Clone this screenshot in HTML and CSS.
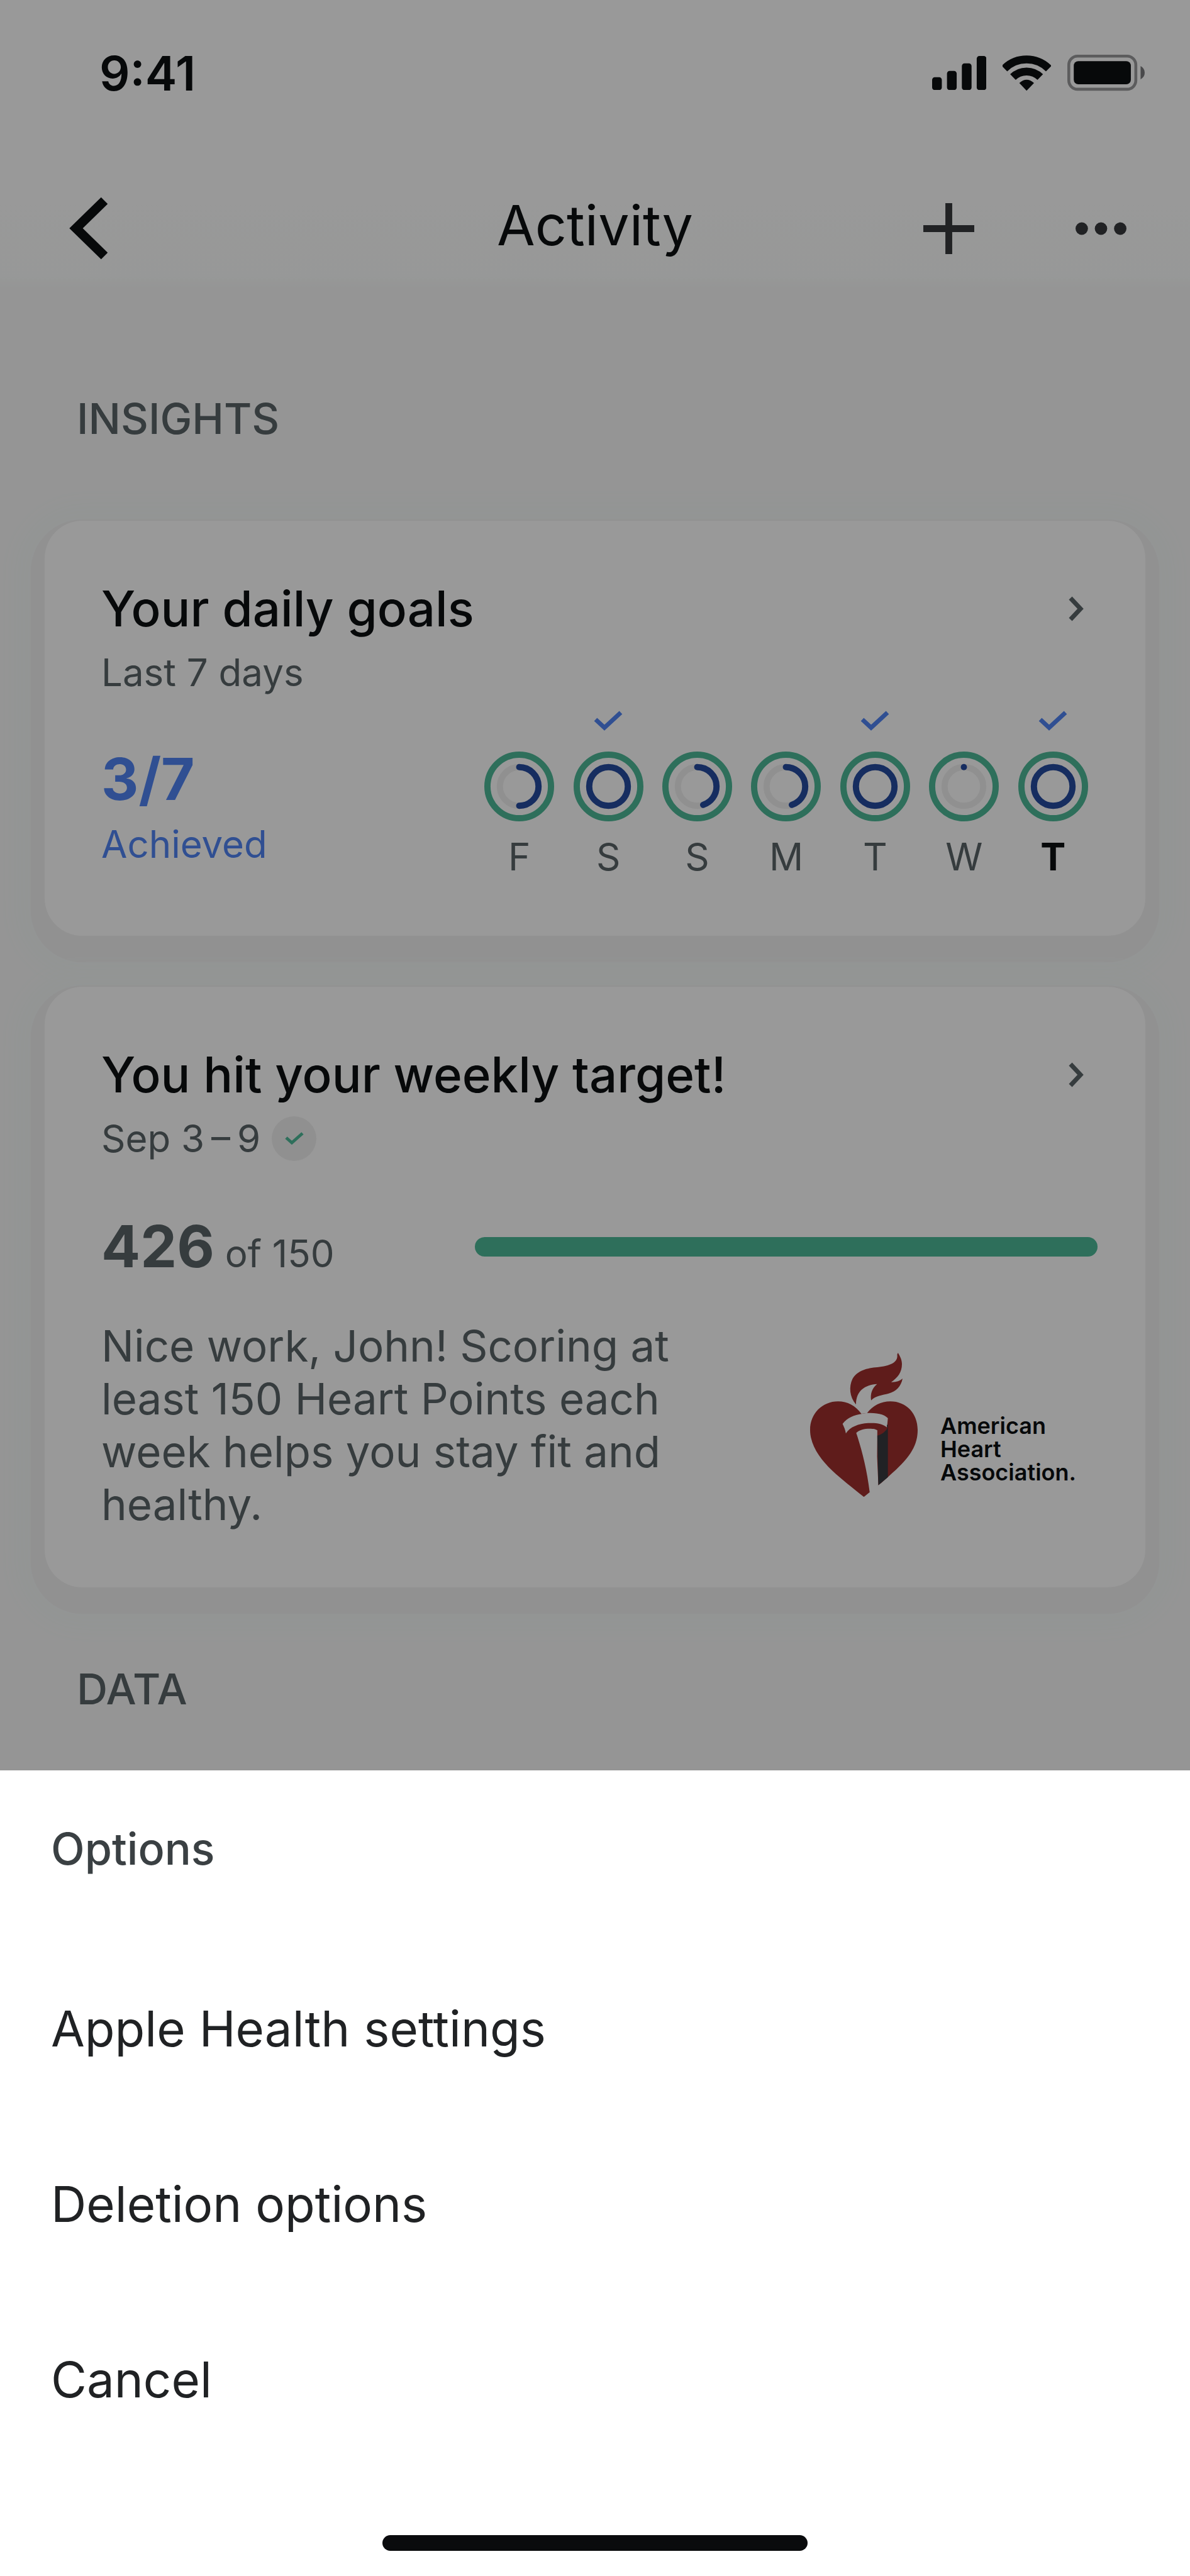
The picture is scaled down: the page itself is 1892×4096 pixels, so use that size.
FILE: index.html
```html
<!DOCTYPE html>
<html lang="en">
<head>
  <meta charset="UTF-8" />
  <meta name="viewport" content="width=device-width, initial-scale=1.0" />
  <title>Activity</title>
  <link rel="stylesheet" href="styles.css">
</head>
<body>
  <div class="screen">
    <div class="status-bar">
      <span class="time">9:41</span>
      <div class="status-icons">
        <svg class="signal" viewBox="0 0 262 165">
          <rect x="0" y="103" width="47" height="62" rx="13" />
          <rect x="72" y="72" width="47" height="93" rx="13" />
          <rect x="144" y="36" width="47" height="129" rx="13" />
          <rect x="216" y="0" width="47" height="165" rx="13" />
        </svg>
        <svg class="wifi" viewBox="475 85 234 171">
          <path d="M484 149A152 152 0 0 1 698 149M525 190A94 94 0 0 1 657 190" fill="none" stroke="currentColor" stroke-width="38" />
          <path d="M591 256L556 219Q591 187 627 219Z" />
        </svg>
        <svg class="battery" viewBox="0 0 374 174">
          <rect x="7" y="7" width="324" height="160" rx="42" fill="none" stroke="currentColor" stroke-opacity=".42" stroke-width="14" />
          <rect x="31" y="31" width="276" height="112" rx="22" />
          <path d="M354 55Q374 66 374 87T354 119Z" fill-opacity=".55" />
        </svg>
      </div>
    </div>

    <header class="header">
      <button class="icon-btn back" aria-label="Back">
        <svg viewBox="0 0 70 100"><path d="M65 6L20 50L65 94" /></svg>
      </button>
      <h1>Activity</h1>
      <div class="actions">
        <button class="icon-btn" aria-label="Add">
          <svg class="plus" viewBox="0 0 82 82"><path d="M41 0V82M0 41H82" /></svg>
        </button>
        <button class="icon-btn" aria-label="More">
          <svg class="dots" viewBox="0 0 82 82"><circle cx="10" cy="41" r="10" /><circle cx="41" cy="41" r="10" /><circle cx="72" cy="41" r="10" /></svg>
        </button>
      </div>
    </header>

    <main>
      <h2>INSIGHTS</h2>

      <section class="card">
        <div class="card-title">
          <h3>Your daily goals</h3>
          <button class="icon-btn" aria-label="Open daily goals">
            <svg class="chevron" viewBox="0 0 26 40"><path d="M4 3L20 20L4 37" /></svg>
          </button>
        </div>
        <p class="subtitle">Last 7 days</p>
        <div class="card-row">
          <div class="achieved">
            <strong>3/7</strong>
            <span>Achieved</span>
          </div>
          <div class="days">
            <div class="day">
              <svg class="check"></svg>
              <svg class="ring" viewBox="0 0 112 112"><circle class="outer" cx="56" cy="56" r="51" /><circle class="track" cx="56" cy="56" r="31" /><circle class="inner" cx="56" cy="56" r="31" pathLength="100" stroke-dasharray="50 100" /></svg>
              <span>F</span>
            </div>
            <div class="day">
              <svg class="check" viewBox="0 0 46 33"><path d="M3 15L17 28L43 4" /></svg>
              <svg class="ring" viewBox="0 0 112 112"><circle class="outer" cx="56" cy="56" r="51" /><circle class="inner" cx="56" cy="56" r="31" /></svg>
              <span>S</span>
            </div>
            <div class="day">
              <svg class="check"></svg>
              <svg class="ring" viewBox="0 0 112 112"><circle class="outer" cx="56" cy="56" r="51" /><circle class="track" cx="56" cy="56" r="31" /><circle class="inner" cx="56" cy="56" r="31" pathLength="100" stroke-dasharray="45 100" /></svg>
              <span>S</span>
            </div>
            <div class="day">
              <svg class="check"></svg>
              <svg class="ring" viewBox="0 0 112 112"><circle class="outer" cx="56" cy="56" r="51" /><circle class="track" cx="56" cy="56" r="31" /><circle class="inner" cx="56" cy="56" r="31" pathLength="100" stroke-dasharray="45 100" /></svg>
              <span>M</span>
            </div>
            <div class="day">
              <svg class="check" viewBox="0 0 46 33"><path d="M3 15L17 28L43 4" /></svg>
              <svg class="ring" viewBox="0 0 112 112"><circle class="outer" cx="56" cy="56" r="51" /><circle class="inner" cx="56" cy="56" r="31" /></svg>
              <span>T</span>
            </div>
            <div class="day">
              <svg class="check"></svg>
              <svg class="ring" viewBox="0 0 112 112"><circle class="outer" cx="56" cy="56" r="51" /><circle class="track" cx="56" cy="56" r="31" /><circle class="dot" cx="56" cy="25" r="5" /></svg>
              <span>W</span>
            </div>
            <div class="day today">
              <svg class="check" viewBox="0 0 46 33"><path d="M3 15L17 28L43 4" /></svg>
              <svg class="ring" viewBox="0 0 112 112"><circle class="outer" cx="56" cy="56" r="51" /><circle class="inner" cx="56" cy="56" r="31" /></svg>
              <span>T</span>
            </div>
          </div>
        </div>
      </section>

      <section class="card">
        <div class="card-title">
          <h3>You hit your weekly target!</h3>
          <button class="icon-btn" aria-label="Open weekly target">
            <svg class="chevron" viewBox="0 0 26 40"><path d="M4 3L20 20L4 37" /></svg>
          </button>
        </div>
        <p class="subtitle">Sep 3&thinsp;–&thinsp;9
          <span class="badge"><svg viewBox="0 0 30 22"><path d="M2 10L11 18L28 3" /></svg></span>
        </p>
        <div class="card-row points">
          <p class="score"><strong>426</strong> of 150</p>
          <div class="bar"></div>
        </div>
        <div class="message">
          <p>Nice work, John! Scoring at least 150 Heart Points each week helps you stay fit and healthy.</p>
          <div class="logo">
            <!-- torch and heart -->
            <svg viewBox="165 137 520 697">
              <path fill="#9e2f2d" d="M590 137C600 155 609 170 609 192C609 232 588 258 557 279C580 280 598 274 612 262C605 300 580 325 545 334C515 342 480 345 460 367C455 335 465 308 489 288C430 292 387 320 387 387C355 350 352 300 370 263C395 222 440 211 490 207C550 199 592 185 586 145Z" />
              <path fill="#9e2f2d" d="M413 432C385 393 345 372 300 372C225 372 165 430 165 510C165 585 215 652 270 705C320 752 370 790 425 834L495 777C515 762 525 752 541 738C630 660 685 600 685 510C685 430 630 372 553 372C508 372 468 392 440 429Z" />
              <path fill="#fff" d="M322 481C345 450 380 438 413 433L440 428C485 428 522 432 541 453L537 498C515 478 480 475 445 477C400 480 358 495 338 527C335 510 330 498 322 481Z" />
              <path fill="#fff" d="M388 525C403 509 428 504 453 504C472 504 483 506 490 512L489 640L495 778L480 800L453 811C440 700 412 595 388 525Z" />
              <path fill="#37393e" d="M490 538C512 532 527 520 539 502L536 490L541 480V738L495 777Z" />
            </svg>
            <span>American<br>Heart<br>Association.</span>
          </div>
        </div>
      </section>

      <h2>DATA</h2>
    </main>
  </div>

  <div class="backdrop"></div>

  <div class="sheet" role="dialog" aria-labelledby="sheet-title">
    <h2 id="sheet-title">Options</h2>
    <button>Apple Health settings</button>
    <button>Deletion options</button>
    <button>Cancel</button>
    <div class="home-indicator"></div>
  </div>
</body>
</html>
```

FILE: styles.css
```css
* {
  box-sizing: border-box;
  padding: 0;
  margin: 0;
}

body {
  font-family: Inter, "Liberation Sans", sans-serif;
  background: #f8f8f8;
  color: #0d0f12;
}

svg {
  display: block;
  fill: currentColor;
}

button {
  font: inherit;
  color: inherit;
  background: none;
  border: none;
  cursor: pointer;
}

.screen {
  height: 100vh;
  overflow: hidden;
}

/* status bar */
.status-bar {
  display: flex;
  justify-content: space-between;
  align-items: center;
  height: 232px;
  padding: 0 72px 0 158px;
  background: #fff;
}

.time {
  font-size: 76px;
  font-weight: 600;
}

.status-icons {
  display: flex;
  align-items: center;
  gap: 26px;
}

.signal { width: 86px; }
.wifi { width: 77px; }
.battery { width: 123px; }

/* header */
.header {
  display: grid;
  grid-template-columns: 1fr auto 1fr;
  align-items: center;
  height: 230px;
  padding: 50px 101px 18px;
  background: linear-gradient(#fff 40%, #fcfefd 90%, #f8f8f8);
}

.header h1 {
  font-size: 88px;
  font-weight: 400;
  padding-bottom: 10px;
}

.icon-btn path {
  fill: none;
  stroke: currentColor;
}

.back svg {
  width: 70px;
  stroke-width: 15;
}

.actions {
  display: flex;
  justify-content: flex-end;
  gap: 161px;
  color: #37393c;
}

.actions svg {
  width: 81px;
  stroke-width: 11;
}

.dots circle { stroke: none; }

/* content */
main { padding: 161px 71px 0; }

h2 {
  font-size: 68px;
  font-weight: 500;
  line-height: 84px;
  color: #5a6468;
}

main h2 {
  padding-left: 51px;
  margin-bottom: 121px;
}

.card {
  background: #fff;
  border-radius: 60px;
  padding: 90px 76px 90px 90px;
  margin-bottom: 81px;
  box-shadow: 0 20px 0 22px #f2f2f2, 0 20px 40px 40px #f4f8f7;
}

.card:last-of-type { margin-bottom: 119px; }

.card-title {
  display: flex;
  justify-content: space-between;
  align-items: center;
  padding-right: 21px;
}

h3 {
  font-size: 78px;
  font-weight: 500;
  line-height: 100px;
}

.chevron {
  width: 26px;
  stroke-width: 7;
  color: #5a6468;
}

.subtitle {
  display: flex;
  align-items: center;
  gap: 18px;
  font-size: 60px;
  line-height: 80px;
  margin-top: 11px;
  color: #5a6468;
}

.card-row {
  display: grid;
  grid-template-columns: 3fr 5fr;
}

.achieved {
  display: flex;
  flex-direction: column;
  gap: 12px;
  margin-top: 75px;
  color: #5084f3;
}

.achieved strong,
.score strong {
  font-size: 92px;
  line-height: 110px;
}

.achieved span {
  font-size: 60px;
  line-height: 72px;
}

.days {
  display: flex;
  margin-top: 20px;
}

.day {
  flex: 1;
  display: flex;
  flex-direction: column;
  align-items: center;
}

.check {
  width: 46px;
  height: 33px;
  margin-bottom: 33px;
  fill: none;
  stroke: #5084f3;
  stroke-width: 7;
}

.ring {
  width: 111px;
  height: 111px;
  margin-bottom: 20px;
  fill: none;
  stroke-width: 10;
}

.outer { stroke: #4eb998; }
.track { stroke: #f1f1f1; }

.inner {
  stroke: #264ba0;
  stroke-linecap: round;
  transform: rotate(-90deg);
  transform-origin: center;
}

.dot { fill: #264ba0; }

.day span {
  font-size: 60px;
  line-height: 72px;
  color: #5a6468;
}

.today span {
  font-weight: 700;
  color: #0d0f12;
}

.badge {
  display: flex;
  align-items: center;
  justify-content: center;
  width: 71px;
  height: 71px;
  border-radius: 50%;
  background: #f1f1f1;
}

.badge svg {
  width: 30px;
  fill: none;
  stroke: #4eb998;
  stroke-width: 5;
}

.points {
  align-items: center;
  margin-top: 77px;
}

.score {
  font-size: 60px;
  line-height: 110px;
  color: #5a6468;
}

.bar {
  height: 31px;
  margin-bottom: 10px;
  border-radius: 16px;
  background: #4eb998;
}

.message {
  display: flex;
  justify-content: space-between;
  align-items: flex-start;
  margin-top: 50px;
  padding-right: 34px;
}

.message p {
  max-width: 940px;
  font-size: 69px;
  line-height: 84px;
  color: #5a6468;
}

.logo {
  display: flex;
  align-items: flex-end;
  gap: 36px;
  margin-top: 53px;
}

.logo svg {
  width: 171px;
}

.logo span {
  font-size: 36px;
  font-weight: 600;
  line-height: 37px;
  padding-bottom: 20px;
}

/* bottom sheet */
.backdrop {
  position: fixed;
  inset: 0;
  background: rgba(0, 0, 0, 0.4);
}

.sheet {
  position: fixed;
  left: 0;
  right: 0;
  bottom: 0;
  display: flex;
  flex-direction: column;
  padding-top: 83px;
  background: #fff;
}

.sheet h2 {
  padding: 0 81px;
  margin-bottom: 104px;
  font-size: 70px;
  color: #3a4043;
}

.sheet button {
  height: 279px;
  padding: 0 81px;
  font-size: 78px;
  text-align: left;
  color: #202224;
}

.home-indicator {
  width: 676px;
  height: 25px;
  margin: 108px auto 40px;
  border-radius: 13px;
  background: #0a0b0d;
}
```
